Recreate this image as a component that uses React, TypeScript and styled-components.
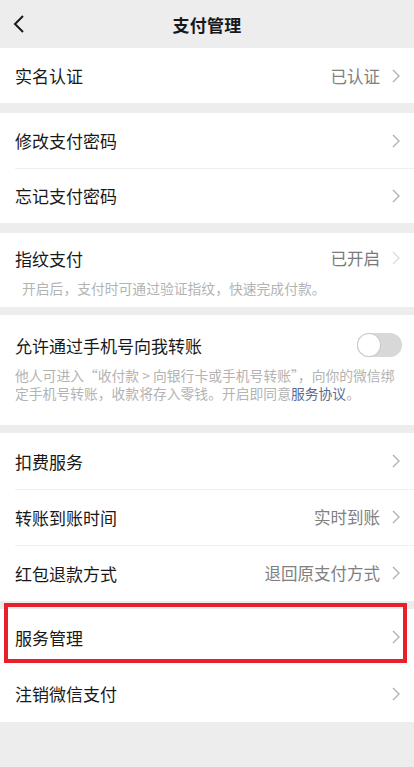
import React from 'react'
import styled, { createGlobalStyle } from 'styled-components'

const GlobalStyle = createGlobalStyle`
  html, body {
    margin: 0;
    padding: 0;
    background: #ededed;
  }
  body {
    font-family: 'Noto Sans CJK SC', 'Noto Sans', sans-serif;
    color: #191919;
  }
`

const Screen = styled.div`
  width: 414px;
  min-height: 767px;
  background: #ededed;
  display: flex;
  flex-direction: column;
`

const Header = styled.div`
  height: 48px;
  display: grid;
  grid-template-columns: 48px 1fr 48px;
  align-items: center;
`

const BackButton = styled.div`
  display: flex;
  align-items: center;
  padding-left: 13px;
`

const Title = styled.div`
  text-align: center;
  font-size: 17px;
  font-weight: 700;
  letter-spacing: 0.2px;
`

const Group = styled.div<{ $gap?: number }>`
  background: #fff;
  margin-top: ${(p) => p.$gap ?? 0}px;
`

const Row = styled.div<{ $h?: number }>`
  position: relative;
  height: ${(p) => p.$h ?? 55}px;
  display: flex;
  align-items: center;
  padding: 0 14px 0 15px;
  & + &::before {
    content: '';
    position: absolute;
    top: 0;
    left: 15px;
    right: 0;
    border-top: 1px solid #efefef;
  }
`

const Label = styled.div`
  flex: 1;
  font-size: 17px;
  color: #191919;
`

const Value = styled.div<{ $dark?: boolean }>`
  font-size: 16.5px;
  color: ${(p) => (p.$dark ? '#7a7a7a' : '#808080')};
  margin-right: 12px;
`

const Block = styled.div<{ $pt: number; $pb: number }>`
  padding: ${(p) => p.$pt}px 12px ${(p) => p.$pb}px 15px;
`

const BlockHead = styled.div`
  display: flex;
  align-items: center;
  height: 24px;
`

const Hint = styled.div<{ $indent?: number; $mt: number }>`
  font-size: 13.8px;
  line-height: 18px;
  color: #b3b3b3;
  margin-top: ${(p) => p.$mt}px;
  padding-left: ${(p) => p.$indent ?? 0}px;
`

const Link = styled.span`
  color: #576b95;
`

const Toggle = styled.div`
  width: 45px;
  height: 24px;
  border-radius: 12px;
  background: #d8d8d8;
  display: flex;
  align-items: center;
  padding: 1px;
  box-sizing: border-box;
`

const Knob = styled.div`
  width: 22px;
  height: 22px;
  border-radius: 50%;
  background: #fff;
  box-shadow: 0 0 0 1px #c9c9c9;
`

const ChevronSlot = styled.span`
  display: flex;
  margin-right: 2px;
`

const Highlight = styled.div`
  position: absolute;
  top: -6px;
  bottom: 2px;
  left: 4px;
  right: 7px;
  border: 4px solid #e8202a;
  pointer-events: none;
`

const Chevron = ({ light }: { light?: boolean }) => (
  <svg width="8" height="14" viewBox="0 0 8 14">
    <path
      d="M1 1 L7 7 L1 13"
      fill="none"
      stroke={light ? '#dcdcdc' : '#b2b2b2'}
      strokeWidth="1.4"
    />
  </svg>
)

const BackIcon = () => (
  <svg width="12" height="20" viewBox="0 0 12 20">
    <path d="M10 2 L2 10 L10 18" fill="none" stroke="#191919" strokeWidth="2" />
  </svg>
)

type Item = { label: string; value?: string; highlight?: boolean }

const ListRow = ({ label, value, highlight, h }: Item & { h?: number }) => (
  <Row $h={h}>
    <Label>{label}</Label>
    {value && <Value>{value}</Value>}
    <Chevron />
    {highlight && <Highlight />}
  </Row>
)

const App: React.FC = () => {
  return (
    <Screen>
      <GlobalStyle />
      <Header>
        <BackButton>
          <BackIcon />
        </BackButton>
        <Title>支付管理</Title>
        <div />
      </Header>

      <Group>
        <ListRow label="实名认证" value="已认证" />
      </Group>

      <Group $gap={10}>
        <ListRow label="修改支付密码" />
        <ListRow label="忘记支付密码" />
      </Group>

      <Group $gap={10}>
        <Block $pt={13} $pb={10}>
          <BlockHead>
            <Label>指纹支付</Label>
            <Value $dark>已开启</Value>
            <ChevronSlot>
              <Chevron light />
            </ChevronSlot>
          </BlockHead>
          <Hint $indent={7} $mt={9}>
            开启后，支付时可通过验证指纹，快速完成付款。
          </Hint>
        </Block>
      </Group>

      <Group $gap={8}>
        <Block $pt={18} $pb={23}>
          <BlockHead>
            <Label>允许通过手机号向我转账</Label>
            <Toggle>
              <Knob />
            </Toggle>
          </BlockHead>
          <Hint $mt={9}>
            他人可进入“收付款 &gt; 向银行卡或手机号转账”，向你的微信绑定手机号转账，收款将存入零钱。开启即同意
            <Link>服务协议</Link>。
          </Hint>
        </Block>
      </Group>

      <Group $gap={8}>
        <ListRow h={56} label="扣费服务" />
        <ListRow h={56} label="转账到账时间" value="实时到账" />
        <ListRow h={56} label="红包退款方式" value="退回原支付方式" />
      </Group>

      <Group $gap={8}>
        <ListRow h={56} label="服务管理" highlight />
        <ListRow h={57} label="注销微信支付" />
      </Group>
    </Screen>
  )
}

export default App
